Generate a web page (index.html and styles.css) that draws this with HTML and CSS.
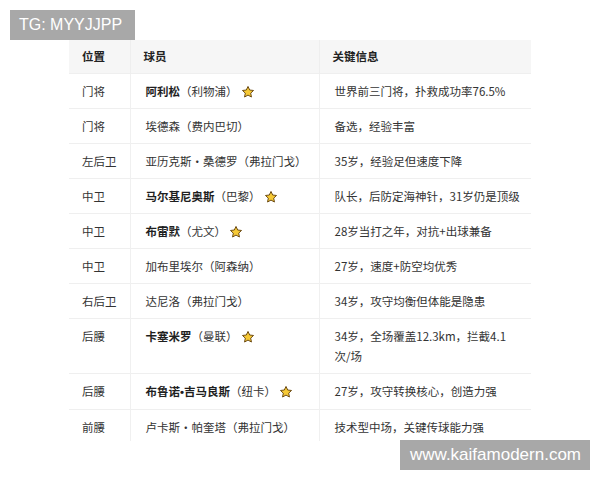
FILE: index.html
```html
<!DOCTYPE html>
<html lang="zh">
<head>
<meta charset="utf-8">
<link rel="stylesheet" href="styles.css">
</head>
<body>
<div class="page">
  <div class="tag tag-top">TG: MYYJJPP</div>
  <table class="roster">
    <colgroup><col class="c-pos"><col class="c-name"><col class="c-info"></colgroup>
    <thead>
      <tr><th>位置</th><th>球员</th><th>关键信息</th></tr>
    </thead>
    <tbody>
      <tr><td>门将</td><td><b>阿利松</b>（利物浦）<span class="star"><svg viewBox="0 0 24 24"><path d="M12 2.5l2.9 6.1 6.6.8-4.9 4.6 1.3 6.6L12 17.3l-5.9 3.3 1.3-6.6-4.9-4.6 6.6-.8z"/></svg></span></td><td>世界前三门将，扑救成功率76.5%</td></tr>
      <tr><td>门将</td><td>埃德森（费内巴切）</td><td>备选，经验丰富</td></tr>
      <tr><td>左后卫</td><td>亚历克斯·桑德罗（弗拉门戈）</td><td>35岁，经验足但速度下降</td></tr>
      <tr><td>中卫</td><td><b>马尔基尼奥斯</b>（巴黎）<span class="star"><svg viewBox="0 0 24 24"><path d="M12 2.5l2.9 6.1 6.6.8-4.9 4.6 1.3 6.6L12 17.3l-5.9 3.3 1.3-6.6-4.9-4.6 6.6-.8z"/></svg></span></td><td>队长，后防定海神针，31岁仍是顶级</td></tr>
      <tr><td>中卫</td><td><b>布雷默</b>（尤文）<span class="star"><svg viewBox="0 0 24 24"><path d="M12 2.5l2.9 6.1 6.6.8-4.9 4.6 1.3 6.6L12 17.3l-5.9 3.3 1.3-6.6-4.9-4.6 6.6-.8z"/></svg></span></td><td>28岁当打之年，对抗+出球兼备</td></tr>
      <tr><td>中卫</td><td>加布里埃尔（阿森纳）</td><td>27岁，速度+防空均优秀</td></tr>
      <tr><td>右后卫</td><td>达尼洛（弗拉门戈）</td><td>34岁，攻守均衡但体能是隐患</td></tr>
      <tr><td>后腰</td><td><b>卡塞米罗</b>（曼联）<span class="star"><svg viewBox="0 0 24 24"><path d="M12 2.5l2.9 6.1 6.6.8-4.9 4.6 1.3 6.6L12 17.3l-5.9 3.3 1.3-6.6-4.9-4.6 6.6-.8z"/></svg></span></td><td>34岁，全场覆盖12.3km，拦截4.1<br>次/场</td></tr>
      <tr><td>后腰</td><td><b>布鲁诺<span class="dot">•</span>吉马良斯</b>（纽卡）<span class="star"><svg viewBox="0 0 24 24"><path d="M12 2.5l2.9 6.1 6.6.8-4.9 4.6 1.3 6.6L12 17.3l-5.9 3.3 1.3-6.6-4.9-4.6 6.6-.8z"/></svg></span></td><td>27岁，攻守转换核心，创造力强</td></tr>
      <tr class="last"><td>前腰</td><td>卢卡斯·帕奎塔（弗拉门戈）</td><td>技术型中场，关键传球能力强</td></tr>
    </tbody>
  </table>
  <div class="tag tag-bottom">www.kaifamodern.com</div>
</div>
</body>
</html>
```
FILE: styles.css
```css
html, body {
  margin: 0;
  padding: 0;
  background: #ffffff;
}
body {
  font-family: "Noto Sans CJK SC", "Noto Sans", sans-serif;
  color: #333333;
}
.page {
  position: relative;
  width: 600px;
  height: 480px;
  overflow: hidden;
  padding-top: 40px;
  box-sizing: border-box;
}
.tag {
  position: absolute;
  background: #a8a8a8;
  color: #ffffff;
  font-family: "Liberation Sans", Arial, sans-serif;
  font-size: 16px;
  line-height: 30px;
  height: 30px;
  box-sizing: border-box;
  z-index: 2;
}
.tag-top {
  left: 10px;
  top: 10px;
  width: 125px;
  padding-left: 9px;
}
.tag-bottom {
  left: 400px;
  top: 440px;
  width: 190px;
  padding-left: 10px;
  font-size: 17px;
}
.roster {
  margin-left: 69px;
  width: 462px;
  border-collapse: collapse;
  table-layout: fixed;
  font-size: 11.5px;
  line-height: 20px;
}
.c-pos { width: 61px; }
.c-name { width: 189px; }
.c-info { width: 212px; }
.roster th,
.roster td {
  box-sizing: border-box;
  text-align: left;
  white-space: nowrap;
  overflow: hidden;
}
.roster th {
  background: #f6f6f6;
  font-weight: bold;
  color: #222;
  padding: 6px 13px 7px;
  border-right: 1px solid #eeeeee;
}
.roster th:last-child,
.roster td:last-child { border-right: none; }
.roster td {
  padding: 7px 13px 7px 15px;
  vertical-align: top;
  border-top: 1px solid #efefef;
  border-right: 1px solid #f0f0f0;
}
.roster td:first-child,
.roster th:first-child { padding-left: 13px; }
.roster b {
  font-weight: bold;
  color: #1f1f1f;
}
.dot {
  font-family: "Liberation Sans", Arial, sans-serif;
}
.roster tr.last td { padding-bottom: 4px; }
.star {
  display: inline-block;
  width: 14px;
  height: 14px;
  margin-left: 3px;
  vertical-align: -3px;
}
.star svg {
  width: 14px;
  height: 14px;
  display: block;
}
.star path {
  fill: #f6c935;
  stroke: #6b4a12;
  stroke-width: 1.7;
  stroke-linejoin: round;
}
```
